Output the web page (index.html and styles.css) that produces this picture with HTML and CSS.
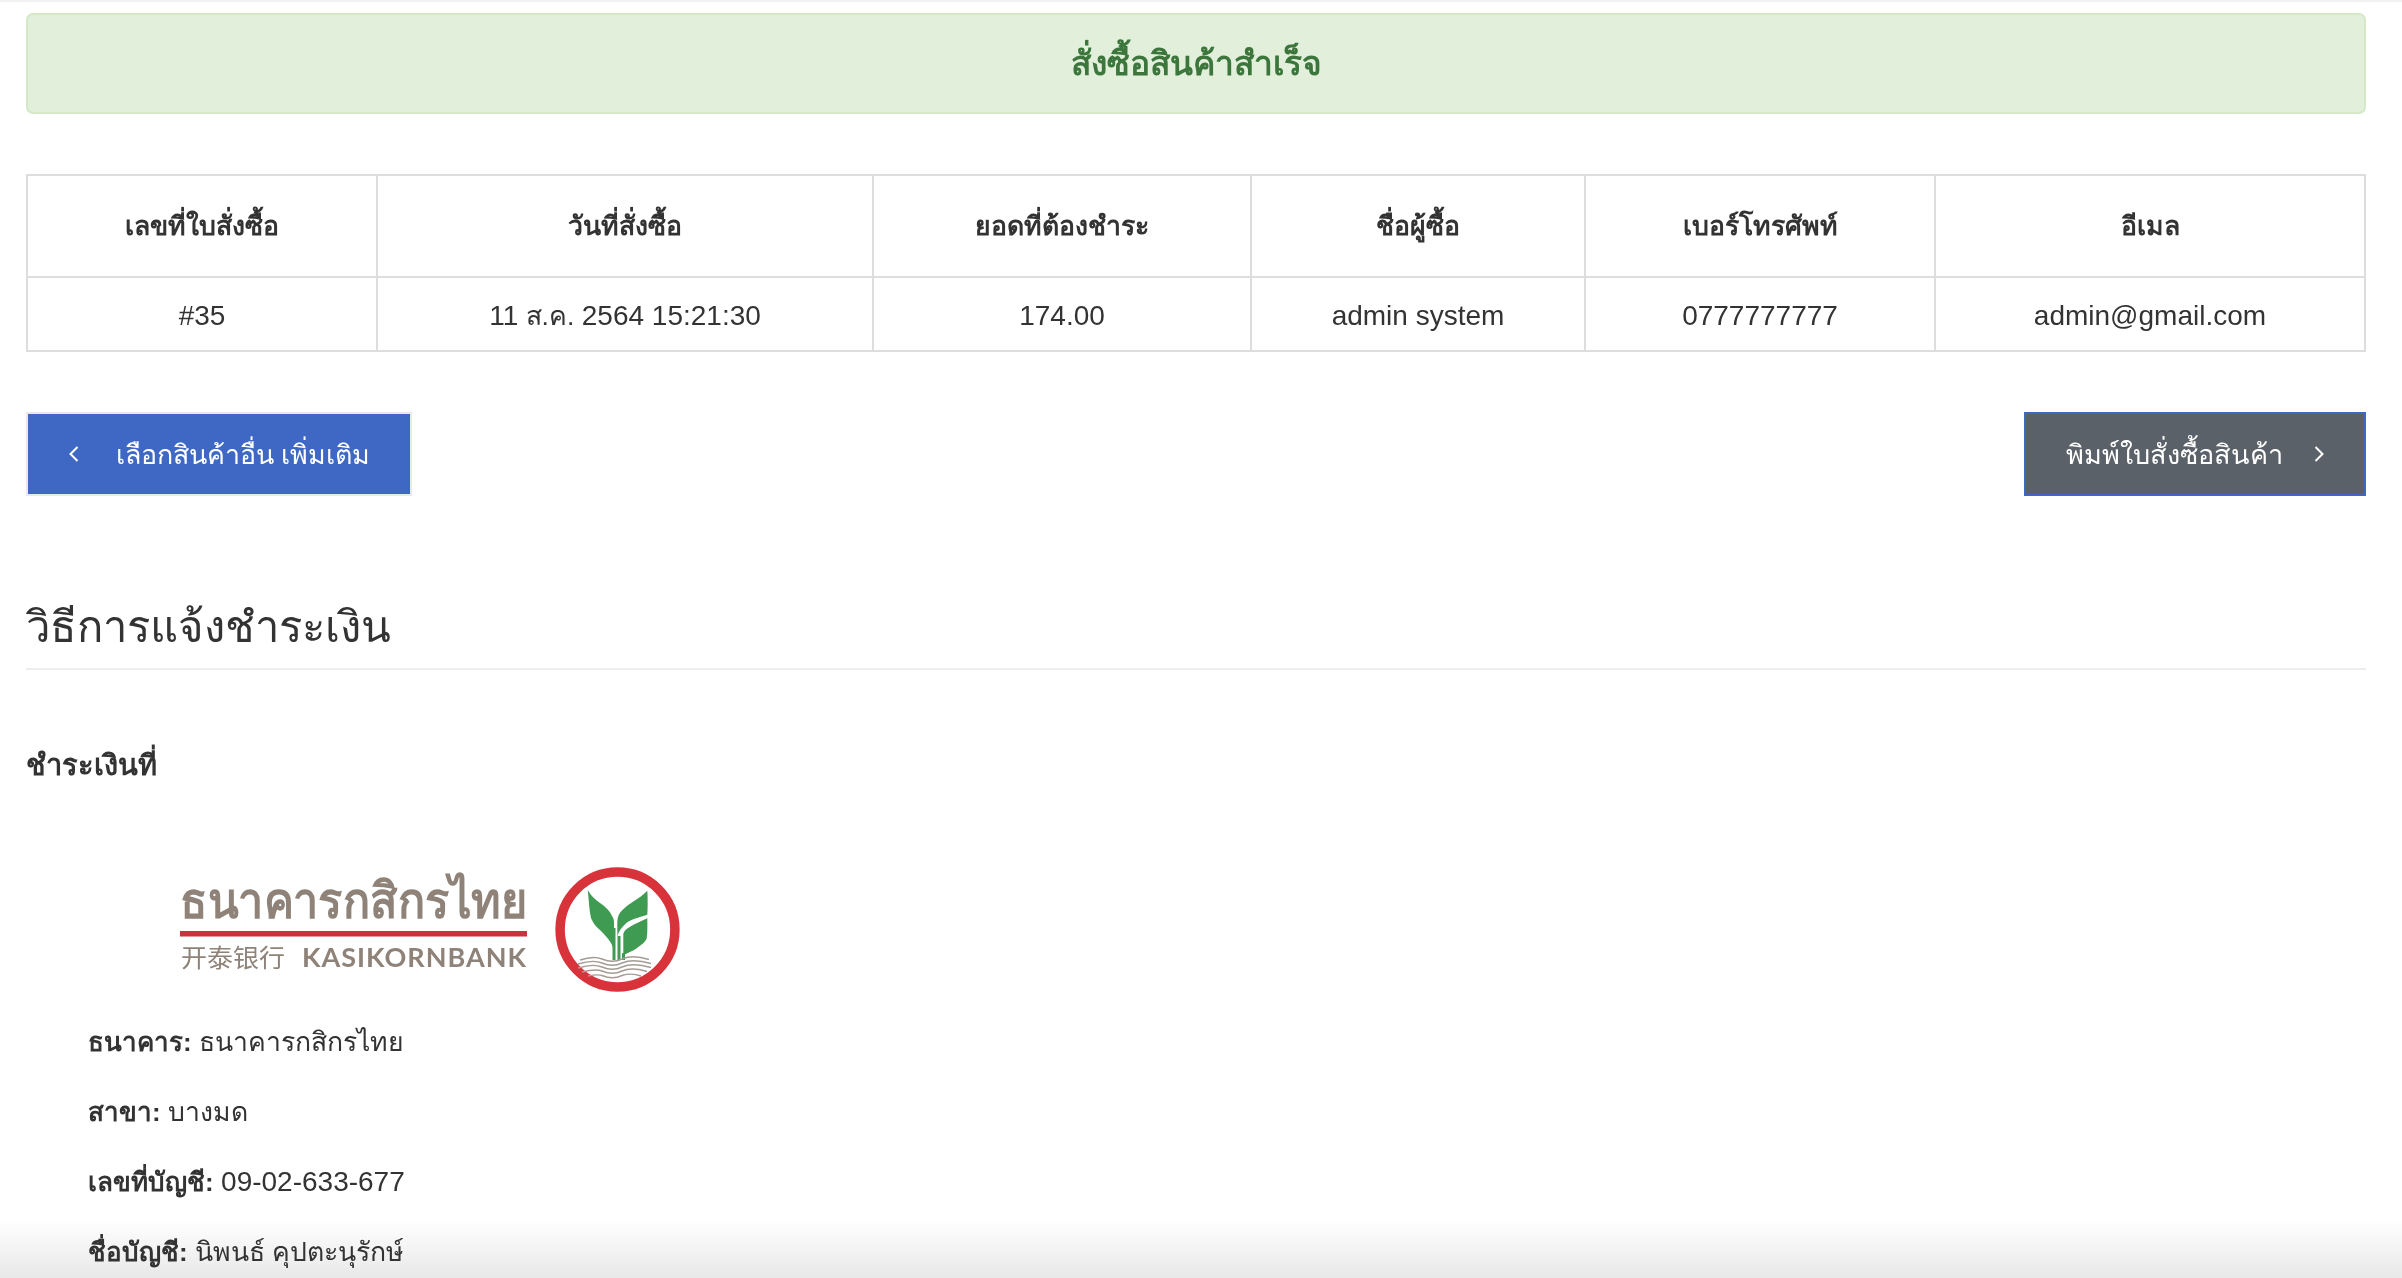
FILE: index.html
```html
<!DOCTYPE html>
<html lang="th">
<head>
<meta charset="utf-8">
<title>สั่งซื้อสินค้าสำเร็จ</title>
<link rel="stylesheet" href="styles.css">
</head>
<body>
<main class="page">
  <div class="alert">สั่งซื้อสินค้าสำเร็จ</div>
  <table class="order">
    <colgroup>
      <col class="c1"><col class="c2"><col class="c3"><col class="c4"><col class="c5"><col class="c6">
    </colgroup>
    <thead>
      <tr><th>เลขที่ใบสั่งซื้อ</th><th>วันที่สั่งซื้อ</th><th>ยอดที่ต้องชำระ</th><th>ชื่อผู้ซื้อ</th><th>เบอร์โทรศัพท์</th><th>อีเมล</th></tr>
    </thead>
    <tbody>
      <tr><td class="lat">#35</td><td><span class="lat">11</span> ส.ค. <span class="lat">2564 15:21:30</span></td><td class="lat">174.00</td><td class="lat">admin system</td><td class="lat">0777777777</td><td class="lat">admin@gmail.com</td></tr>
    </tbody>
  </table>
  <div class="actions">
    <a class="btn btn-primary" href="#">
      <svg class="chev" viewBox="0 0 12 20"><path d="M9.5 3 2.5 10l7 7"/></svg>
      <span>เลือกสินค้าอื่น เพิ่มเติม</span>
    </a>
    <a class="btn btn-dark" href="#">
      <span>พิมพ์ใบสั่งซื้อสินค้า</span>
      <svg class="chev" viewBox="0 0 12 20"><path d="M2.5 3l7 7-7 7"/></svg>
    </a>
  </div>
  <h2 class="title">วิธีการแจ้งชำระเงิน</h2>
  <h4 class="sub">ชำระเงินที่</h4>
  <div class="bank">
    <svg class="logo" viewBox="0 0 520 130" role="img" aria-label="ธนาคารกสิกรไทย KASIKORNBANK">
      <text class="logo-th" x="0" y="50" textLength="347" lengthAdjust="spacingAndGlyphs">ธนาคารกสิกรไทย</text>
      <rect class="logo-line" x="0" y="63" width="347" height="5.5"/>
      <text class="logo-cn" x="1" y="98.5" textLength="104" lengthAdjust="spacingAndGlyphs">开泰银行</text>
      <text class="logo-en" x="122" y="98.5" textLength="225" lengthAdjust="spacingAndGlyphs">KASIKORNBANK</text>
      <circle class="logo-ring" cx="437.5" cy="61.5" r="57.4"/>
      <path class="logo-leaf" d="M407.7 22C411 28 415 31 420 35c6 4 10 8 12 13 2 3 2 5 2 8v26c-1-3-2-5-3-7-3-5-7-9-11-13-4-3-7-7-9-12-2-8-2-18-3.300-28z"/>
      <path class="logo-leaf" d="M467.300 22.700C463 27 459 30 453 33.700c-6 4-10 7-13 11-2 3-2.700 6-2.700 10.600v13.400c1-5 4-9 9-13.700 7-5 15-6 21-8.300.5-8 .5-16 0-24.700z"/>
      <path class="logo-leaf" d="M467.300 50.300c-6 2.700-11 5-17.300 8.400-4 2.300-6.700 5-6.700 8.300v20c5-2 9.500-4 13.400-6.700 4-3 8.700-6 10-10 1-6 .6-13 .6-20z"/>
      <path class="logo-stem" d="M432.500 60h3v32h-3zM437.500 68h3v24h-3zM442 85h3v7h-3z"/>
      <path class="logo-wave" d="M400 92c9-3 16-3.500 22-1 7 3 14 3 20 0 7-3 16-3 27 .5M398 96c10-3 18-3.500 24-1 7 3 14 3 20 0 7-3 17-3 29 .5M398 100c10-3 18-3.500 24-1 7 3 14 3 20 0 7-3 17-3 29 .5M402 104c8-2 15-3 20-1 7 3 14 3 20 0 7-3 15-2.500 25 .5M408 108c5-1 10-2 14-.5 7 3 14 3 20 0 6-2 12-2 19 .5"/>
    </svg>
    <p><strong>ธนาคาร:</strong> ธนาคารกสิกรไทย</p>
    <p><strong>สาขา:</strong> บางมด</p>
    <p><strong>เลขที่บัญชี:</strong> <span class="lat">09-02-633-677</span></p>
    <p><strong>ชื่อบัญชี:</strong> นิพนธ์ คุปตะนุรักษ์</p>
  </div>
</main>
<div class="top-edge"></div>
<div class="bottom-fade"></div>
</body>
</html>
```

FILE: styles.css
```css
html, body {
  margin: 0;
  height: 100%;
  overflow: hidden;
  background: #fff;
}
body {
  font-family: "Liberation Sans", "Noto Sans", sans-serif;
  font-size: 26.6px;
  line-height: 38px;
  color: #333;
}
.lat {
  font-size: 28px;
}
.page {
  position: relative;
  z-index: 1;
  padding: 13px 36px 0 26px;
}
.alert {
  box-sizing: border-box;
  height: 101px;
  display: flex;
  align-items: center;
  justify-content: center;
  background: #e2efda;
  border: 2px solid #d6e9c6;
  border-radius: 7px;
  color: #3c763d;
  font-size: 33.500px;
  font-weight: 700;
}
.order {
  width: 2338px;
  margin-top: 60px;
  table-layout: fixed;
  border-collapse: collapse;
  text-align: center;
}
.c1 { width: 350px; }
.c2 { width: 496px; }
.c3 { width: 378px; }
.c4 { width: 334px; }
.c5 { width: 350px; }
.c6 { width: 430px; }
.order th, .order td {
  border: 2px solid #ddd;
  padding: 0;
}
.order th { height: 100px; font-weight: 700; }
.order td { height: 72px; padding-top: 3px; box-sizing: border-box; height: 74px; }
.actions {
  display: flex;
  justify-content: space-between;
  margin-top: 60px;
}
.btn {
  box-sizing: border-box;
  height: 84px;
  display: flex;
  align-items: center;
  color: #fff;
  font-size: 26.800px;
  text-decoration: none;
}
.btn span {
  padding-top: 2px;
}
.btn-primary {
  width: 386px;
  padding-left: 40px;
  gap: 36px;
  background: #3f68c4;
  border: 2px solid #e9e9e9;
}
.btn-dark {
  width: 342px;
  padding-left: 40px;
  gap: 30px;
  background: #5b6168;
  border: 2px solid #3f68c4;
}
.btn-dark span {
  font-size: 27.100px;
}
.chev {
  width: 12px;
  height: 20px;
  flex: none;
}
.chev path {
  fill: none;
  stroke: #fff;
  stroke-width: 2;
}
.title {
  margin: 100px 0 0;
  padding-bottom: 10px;
  border-bottom: 2px solid #eee;
  font-size: 43.600px;
  line-height: 62px;
  font-weight: 400;
}
.sub {
  margin: 74px 0 0;
  font-size: 29px;
  line-height: 42px;
  font-weight: 700;
}
.bank {
  padding: 0 0 0 62px;
}
.bank p {
  margin: 0 0 32px;
}
.bank strong {
  font-size: 26px;
}
.logo {
  display: block;
  width: 520px;
  height: 130px;
  margin: 82px 0 25px 92px;
  overflow: visible;
}
.logo-th {
  font-family: "Liberation Sans", "Noto Sans", sans-serif;
  font-size: 50px;
  font-weight: 700;
  fill: #8f8379;
}
.logo-line { fill: #c9333c; }
.logo-cn {
  font-family: "Noto Sans CJK SC", sans-serif;
  font-size: 25px;
  fill: #8f8379;
}
.logo-en {
  font-family: "Lato", sans-serif;
  font-size: 27px;
  font-weight: 700;
  letter-spacing: 1px;
  fill: #8f8379;
}
.logo-ring {
  fill: #fff;
  stroke: #d8333a;
  stroke-width: 9.500px;
}
.logo-leaf { fill: #3f9b52; }
.logo-stem { fill: #3f9b52; }
.logo-wave {
  fill: none;
  stroke: #a39c95;
  stroke-width: 1.400px;
}
.top-edge {
  position: fixed;
  top: 0;
  left: 0;
  right: 0;
  height: 2px;
  background: #f1f1f1;
}
.bottom-fade {
  position: fixed;
  left: 0;
  right: 0;
  bottom: 0;
  height: 58px;
  background: linear-gradient(to bottom, rgba(232,232,232,0), #e8e8e8);
  pointer-events: none;
}
```
